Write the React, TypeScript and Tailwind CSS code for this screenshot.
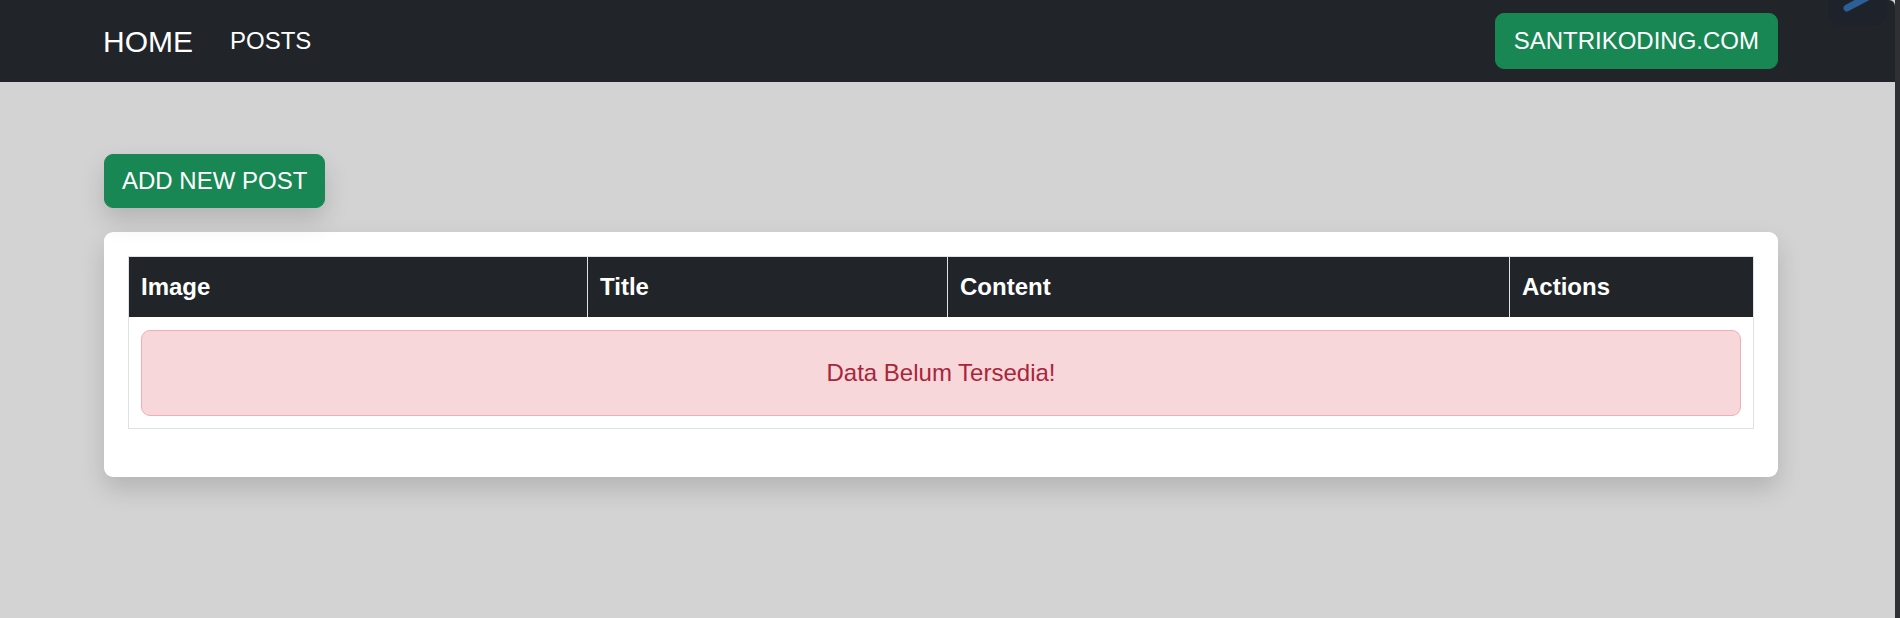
import React from "react";

const font = { fontFamily: '"Liberation Sans", Arial, sans-serif' };

function Navbar() {
  return (
    <nav className="flex h-[82px] items-center justify-between bg-[#212529] pl-[103px] pr-[117px] rounded-tr-[6px]">
      <div className="flex items-center">
        <a href="#" className="text-[30px] leading-[45px] text-white">
          HOME
        </a>
        <a href="#" className="ml-[37px] text-[24px] leading-[36px] text-white">
          POSTS
        </a>
      </div>
      <a
        href="#"
        className="rounded-[9px] border border-[#198754] bg-[#198754] px-[18px] py-[9px] text-[24px] leading-[36px] text-white"
      >
        SANTRIKODING.COM
      </a>
    </nav>
  );
}

function PostsTable() {
  const headers = [
    { label: "Image", w: "w-[459px]" },
    { label: "Title", w: "w-[360px]" },
    { label: "Content", w: "w-[562px]" },
    { label: "Actions", w: "w-[244px]" },
  ];
  return (
    <table className="w-full table-fixed border-collapse border border-[#dee2e6]">
      <thead>
        <tr>
          {headers.map((h) => (
            <th
              key={h.label}
              className={`${h.w} border-x border-[#dee2e6] bg-[#212529] px-[12px] py-[12px] text-left text-[24px] font-bold leading-[36px] text-white`}
            >
              {h.label}
            </th>
          ))}
        </tr>
      </thead>
      <tbody>
        <tr>
          <td colSpan={4} className="px-[12px] pt-[13px] pb-[12px]">
            <div className="rounded-[9px] border border-[#f1aeb5] bg-[#f8d7da] py-[24px] text-center text-[24px] leading-[36px] text-[#a8263b]">
              Data Belum Tersedia!
            </div>
          </td>
        </tr>
      </tbody>
    </table>
  );
}

export default function App() {
  return (
    <div className="relative flex h-[618px] overflow-hidden bg-[#d3d3d3]" style={font}>
      <div className="flex-1">
        <Navbar />
        <main className="pl-[104px] pr-[117px] pt-[72px]">
          <button className="rounded-[9px] border border-[#198754] bg-[#198754] px-[17px] py-[8px] text-[24px] leading-[36px] text-white shadow-[0_12px_24px_rgba(0,0,0,0.15)]">
            ADD NEW POST
          </button>
          <div className="mt-[24px] rounded-[9px] bg-white p-[24px] pb-[48px] shadow-[0_12px_24px_rgba(0,0,0,0.15)]">
            <PostsTable />
          </div>
        </main>
      </div>
      <div className="w-[5px] bg-[#2f3033]" />
      <div className="absolute left-[1828px] top-[-30px] h-[55px] w-[58px] overflow-hidden rounded-[12px] bg-[#1d222b]">
        <svg width="58" height="55" viewBox="0 0 58 55">
          <line x1="19" y1="38" x2="38" y2="28" stroke="#2d5f96" strokeWidth="7" strokeLinecap="round" />
        </svg>
      </div>
    </div>
  );
}
